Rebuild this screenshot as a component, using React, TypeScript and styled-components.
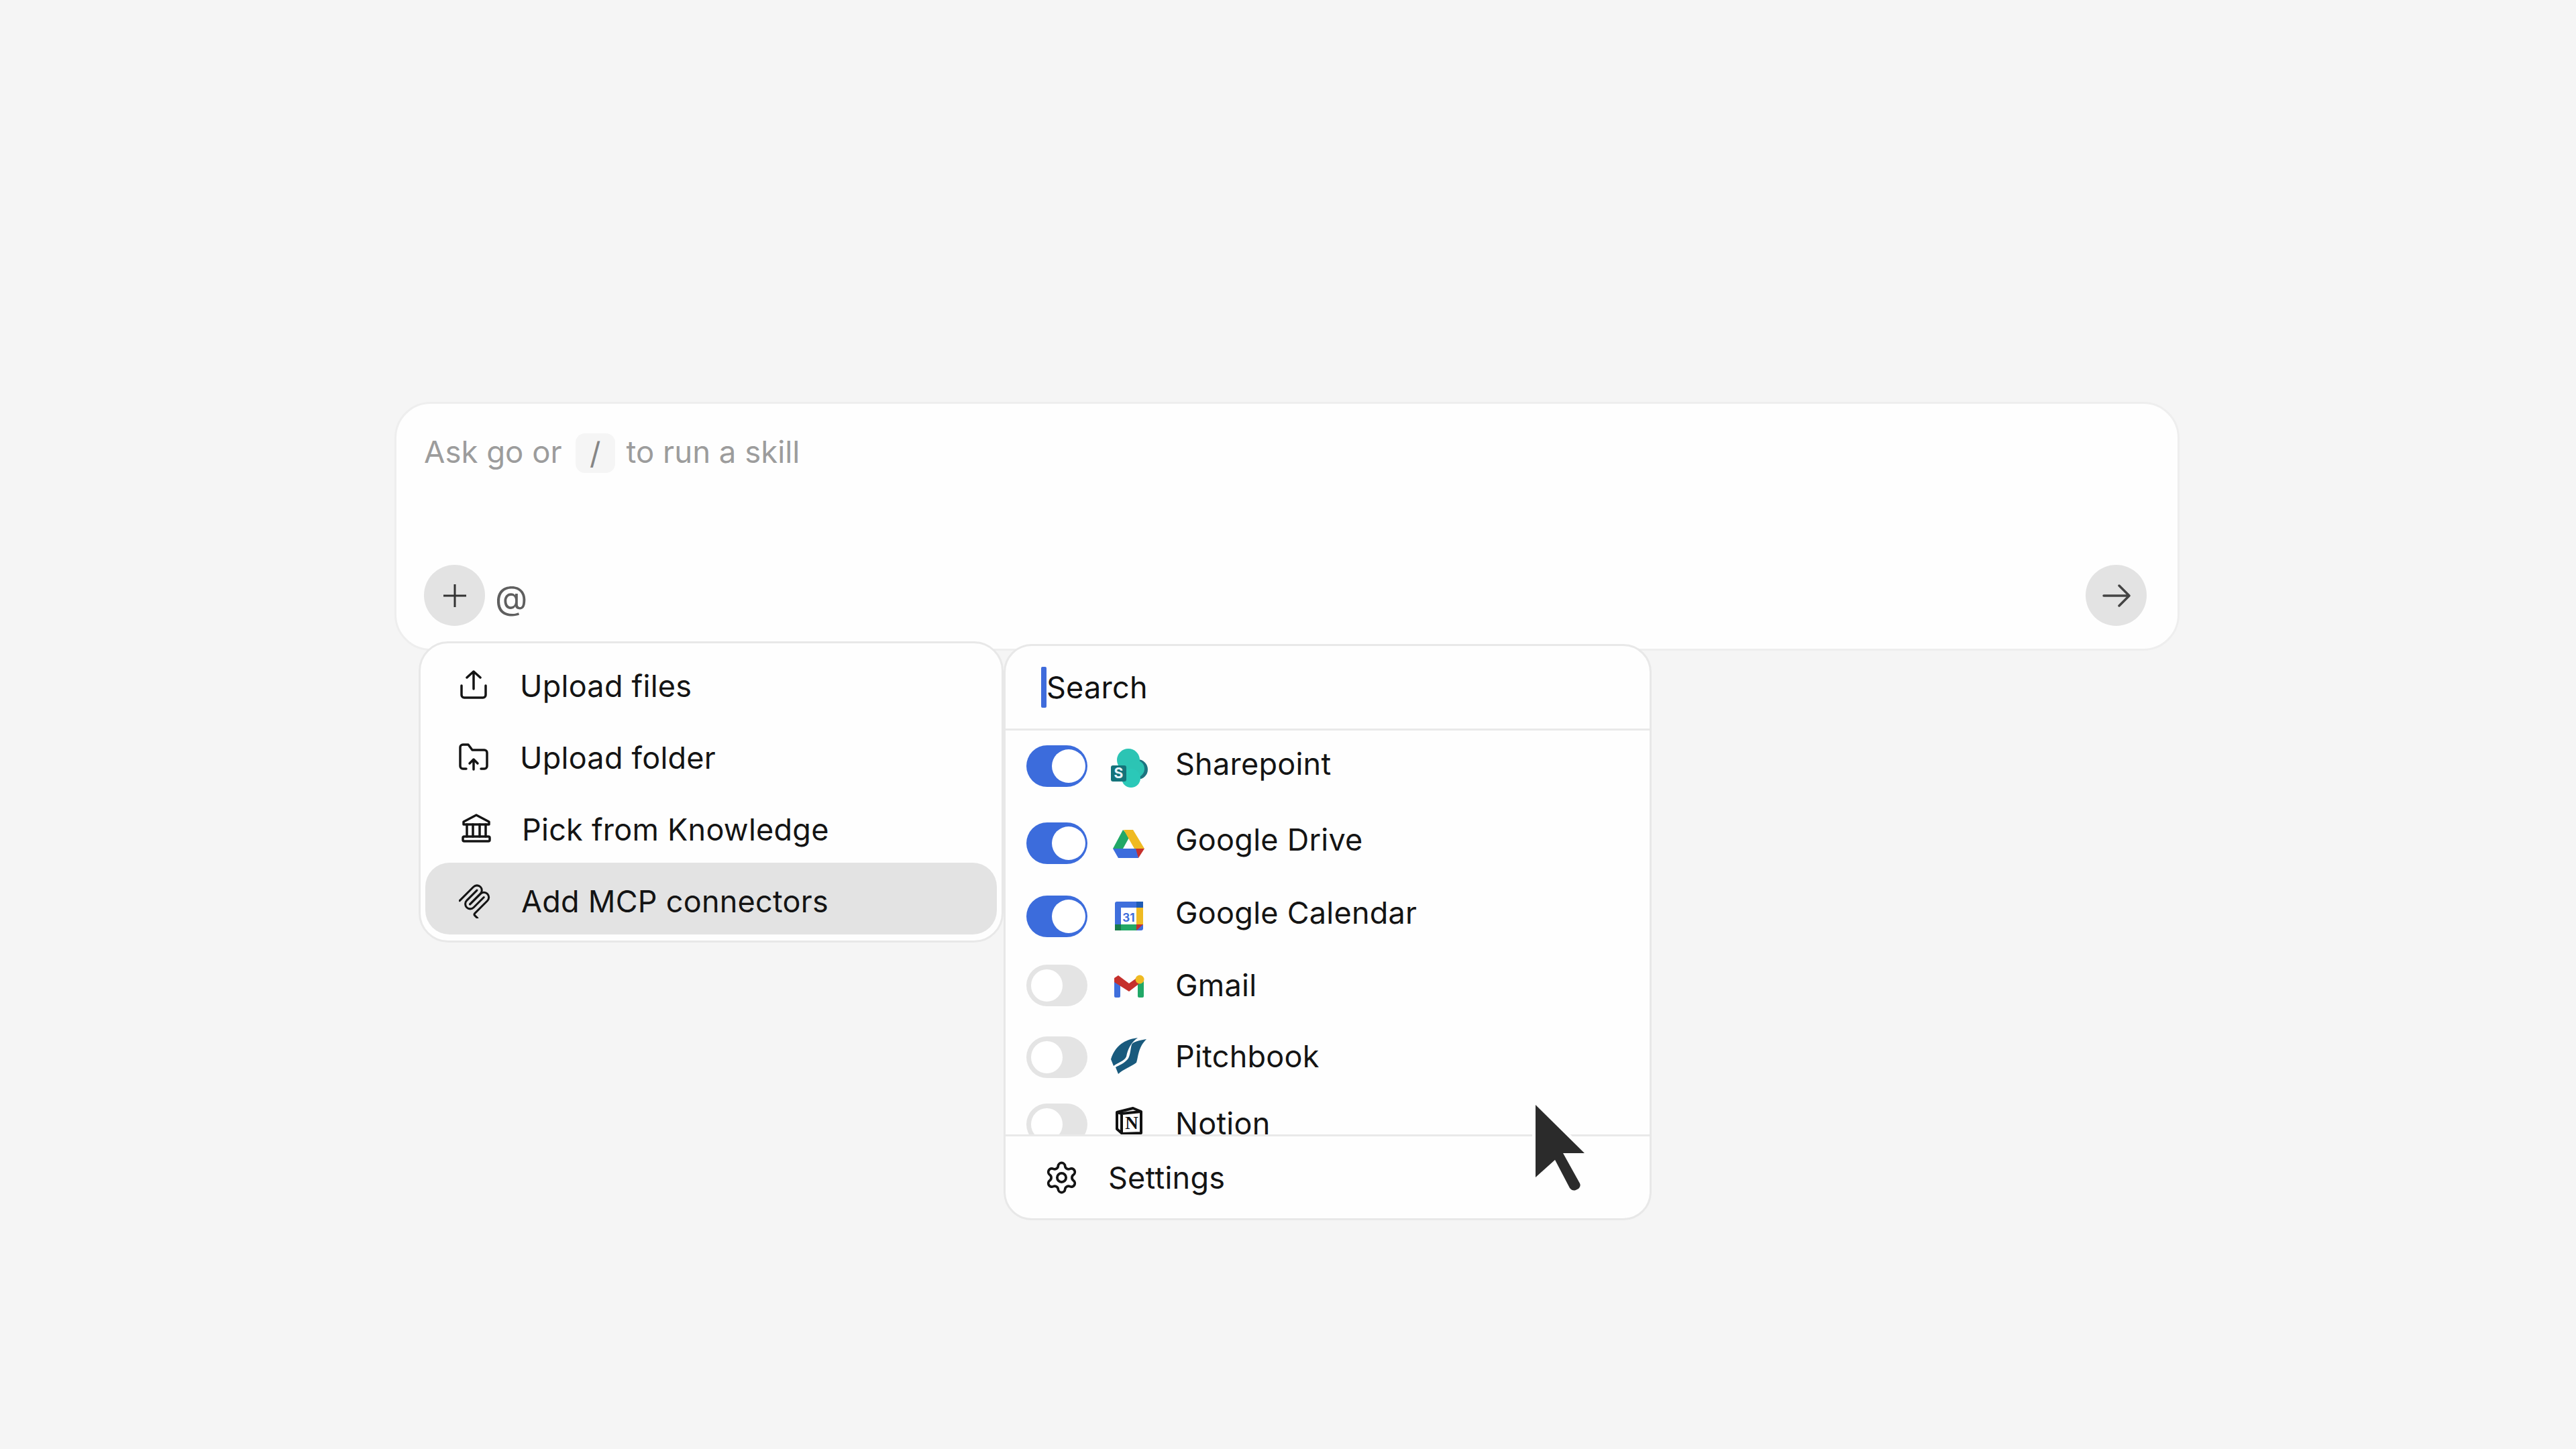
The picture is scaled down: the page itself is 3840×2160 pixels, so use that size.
import { type ReactNode } from "react";
import { Settings } from "lucide-react";
import { createGlobalStyle, styled } from "styled-components";

const GlobalStyle = createGlobalStyle`
  html,
  body {
    margin: 0;
    background: #f5f5f5;
  }

  body {
    width: 3840px;
    height: 2160px;
    overflow: hidden;
    font-family: Inter, "Liberation Sans", sans-serif;
    color: #141414;
  }
`;

const Page = styled.div`
  padding: 599px 0 0 588px;
`;

const Composer = styled.div`
  position: relative;
  box-sizing: border-box;
  width: 2661px;
  height: 371px;
  padding: 40px 46px 34px 41px;
  display: flex;
  flex-flow: column nowrap;
  justify-content: space-between;
  background: #fefefe;
  border: 3px solid #eeeeee;
  border-radius: 54px;
`;

const Placeholder = styled.div`
  display: flex;
  flex-flow: row nowrap;
  align-items: center;
  font-size: 45.5px;
  color: #9c9c9c;
`;

const SlashChip = styled.span`
  width: 59px;
  height: 59px;
  margin: 4px 17px 0 20px;
  display: flex;
  justify-content: center;
  align-items: center;
  background: #f5f5f5;
  border-radius: 14px;
  color: #858585;
`;

const ComposerBar = styled.div`
  display: flex;
  flex-flow: row nowrap;
  align-items: center;
`;

const RoundButton = styled.button`
  width: 91px;
  height: 91px;
  padding: 0;
  display: flex;
  justify-content: center;
  align-items: center;
  border: 0;
  border-radius: 50%;
  background: #e3e3e3;
`;

const AtSign = styled.span`
  margin: 6px auto 0 15px;
  font-size: 50px;
  color: #5f5f5f;
`;

const Popovers = styled.div`
  position: absolute;
  top: 354px;
  left: 33px;
  display: flex;
  flex-flow: row nowrap;
  align-items: flex-start;
`;

const ActionMenu = styled.div`
  box-sizing: border-box;
  width: 872px;
  padding: 6px 7px 9px;
  background: #fefefe;
  border: 3px solid #e8e8e8;
  border-radius: 44px;
`;

const ActionRow = styled.div<{ $active?: boolean }>`
  box-sizing: border-box;
  height: 107px;
  padding: 7px 0 0 50px;
  display: flex;
  flex-flow: row nowrap;
  align-items: center;
  background: ${({ $active }) => ($active ? "#e3e3e3" : "transparent")};
  border-radius: 36px;
`;

const ActionLabel = styled.span<{ $indent?: number }>`
  margin-left: ${({ $indent }) => 43 + ($indent ?? 0)}px;
  font-size: 45px;
  letter-spacing: 0.25px;
`;

const ConnectorPanel = styled.div`
  box-sizing: border-box;
  width: 966px;
  height: 859px;
  margin-top: 4px;
  display: flex;
  flex-flow: column nowrap;
  position: relative;
  background: #fefefe;
  border: 3px solid #e8e8e8;
  border-radius: 42px;
`;

const SearchBar = styled.div`
  flex: 0 0 126px;
  box-sizing: border-box;
  padding-left: 53px;
  display: flex;
  flex-flow: row nowrap;
  align-items: center;
  border-bottom: 3px solid #e9e9e9;
  font-size: 45px;
  letter-spacing: 0.25px;
  color: #111111;
`;

const Caret = styled.span`
  width: 8px;
  height: 61px;
  background: #3f6bdb;
  border-radius: 2px;
`;

const ConnectorList = styled.div`
  flex: 1 1 0;
  min-height: 0;
  padding-left: 31px;
  overflow: hidden;
`;

const ConnectorRow = styled.div<{ $gap: number }>`
  height: 62px;
  margin-top: ${({ $gap }) => $gap}px;
  display: flex;
  flex-flow: row nowrap;
  align-items: center;
`;

const Toggle = styled.span<{ $on?: boolean }>`
  box-sizing: border-box;
  width: 91px;
  height: 62px;
  padding: 0 ${({ $on }) => ($on ? "3px" : "7px")};
  display: flex;
  justify-content: ${({ $on }) => ($on ? "flex-end" : "flex-start")};
  align-items: center;
  background: ${({ $on }) => ($on ? "#3c6cdc" : "#e4e4e4")};
  border-radius: 31px;

  &::after {
    content: "";
    width: ${({ $on }) => ($on ? "50px" : "47px")};
    height: ${({ $on }) => ($on ? "50px" : "48px")};
    background: #ffffff;
    border-radius: 50%;
  }
`;

const LogoSlot = styled.span<{ $shift: number }>`
  width: 56px;
  margin: 0 41px 0 34px;
  display: flex;
  justify-content: center;
  transform: translateY(${({ $shift }) => $shift}px);
`;

const ConnectorName = styled.span<{ $shift: number }>`
  font-size: 45px;
  letter-spacing: 0.25px;
  transform: translateY(${({ $shift }) => $shift}px);
`;

const PanelFooter = styled.div`
  flex: 0 0 125px;
  box-sizing: border-box;
  padding-left: 57px;
  display: flex;
  flex-flow: row nowrap;
  align-items: center;
  gap: 43px;
  border-top: 3px solid #e9e9e9;
  font-size: 45px;
  letter-spacing: 0.25px;
`;

const Pointer = styled.svg`
  position: absolute;
  top: 684px;
  left: 790px;
  overflow: visible;
`;

const SharepointLogo = () => (
  <svg width="56" height="58" viewBox="0 0 56 58">
    <circle cx="41" cy="31" r="15" fill="#1d7480" />
    <circle cx="27" cy="17" r="17" fill="#2cc4b4" />
    <circle cx="38" cy="30" r="13" fill="#2cc4b4" />
    <circle cx="31" cy="44" r="14" fill="#2bc8b8" />
    <rect x="1" y="25" width="23" height="24" rx="3" fill="#14737a" />
    <text x="12.5" y="44" fontSize="21" fontWeight="700" fill="#e8f4fb" textAnchor="middle" fontFamily="Inter">
      S
    </text>
  </svg>
);

const DriveLogo = () => (
  <svg width="48" height="43" viewBox="0 0 48 43">
    <polygon points="15,1 25,11 15,29 0,29" fill="#21a867" />
    <polygon points="16,1 30,1 47,29 32,29" fill="#efba22" />
    <polygon points="0,29 36,29 38,43 8,43" fill="#3c6cdc" />
    <polygon points="34,29 47,29 38,43" fill="#c5302c" />
  </svg>
);

const CalendarLogo = () => (
  <svg width="42" height="43" viewBox="0 0 42 43">
    <rect width="42" height="43" rx="3" fill="#3f6fdc" />
    <rect x="32" y="0" width="10" height="9" fill="#1f5bb5" />
    <rect x="9" y="9" width="23" height="25" fill="#ffffff" />
    <rect x="32" y="9" width="10" height="25" fill="#efba22" />
    <rect x="9" y="34" width="23" height="9" fill="#21a867" />
    <rect x="0" y="34" width="9" height="9" fill="#177a4a" />
    <polygon points="32,34 42,34 32,43" fill="#c5302c" />
    <text x="20.5" y="30" fontSize="17" fontWeight="700" fill="#3f6fdc" textAnchor="middle" fontFamily="Inter">
      31
    </text>
  </svg>
);

const GmailLogo = () => (
  <svg width="46" height="35" viewBox="0 0 46 35">
    <rect x="1" y="9" width="9" height="25" rx="2" fill="#3f6fdc" />
    <rect x="36" y="9" width="9" height="25" rx="2" fill="#21a867" />
    <polygon points="1,5 7,1 23,13 37,3 40,12 23,25 1,11" fill="#c5302c" />
    <circle cx="39" cy="7" r="6.5" fill="#efba22" />
  </svg>
);

const PitchbookLogo = () => (
  <svg width="54" height="56" viewBox="0 0 54 56">
    <path d="M40 1C26 3 8 8 0 33L4 43C10 38 20 36 23 29C25 18 30 8 40 1Z" fill="#195a7d" />
    <path
      d="M53 3C42 5 33 7 31 11C29 18 29 28 25 33C20 39 12 42 7 45L11 55C18 48 30 44 38 38C41 30 40 16 53 3Z"
      fill="#195a7d"
    />
  </svg>
);

const NotionLogo = () => (
  <svg width="40" height="42" viewBox="0 0 40 42">
    <path
      d="M2 8L26 2L38 7V39L10 40L2 33Z"
      fill="#ffffff"
      stroke="#111111"
      strokeWidth="4"
      strokeLinejoin="round"
    />
    <path d="M9 10L38 7M9 10V40" fill="none" stroke="#111111" strokeWidth="4" />
    <path d="M2 8L9 10" stroke="#111111" strokeWidth="4" />
    <text x="24" y="33" fontSize="27" fontWeight="700" fill="#111111" textAnchor="middle" fontFamily="Liberation Serif">
      N
    </text>
  </svg>
);

const UploadIcon = () => (
  <svg width="48" height="48" viewBox="0 0 48 48" fill="none" stroke="#141414" strokeWidth="3.5" strokeLinecap="round" strokeLinejoin="round">
    <path d="M22 3V29M12 12L22 3L32 12" />
    <path d="M4 24V38A4 4 0 0 0 8 42H36A4 4 0 0 0 40 38V24" />
  </svg>
);

const FolderUploadIcon = () => (
  <svg width="48" height="48" viewBox="0 0 48 48" fill="none" stroke="#141414" strokeWidth="3.5" strokeLinecap="round" strokeLinejoin="round">
    <path d="M11 41H6A4 4 0 0 1 2 37V9A4 4 0 0 1 6 5H14L20 13H38A4 4 0 0 1 42 17V37A4 4 0 0 1 38 41H33" />
    <path d="M22 42V27M16 33L22 27L28 33" />
  </svg>
);

const BankIcon = () => (
  <svg width="48" height="48" viewBox="0 0 48 48" fill="none" stroke="#141414" strokeWidth="3.5" strokeLinecap="round" strokeLinejoin="round">
    <path d="M26 3L7 13V17H45V13Z" />
    <path d="M12 17V35M21 17V35M31 17V35M40 17V35" />
    <rect x="6" y="35" width="40" height="7" rx="2" />
  </svg>
);

const McpIcon = () => (
  <svg width="48" height="52" viewBox="14 2 158 168" fill="none" stroke="#141414" strokeWidth="10" strokeLinecap="round">
    <path d="M18 84.85L85.88 16.97C95.25 7.6 110.45 7.6 119.82 16.97C129.2 26.34 129.2 41.54 119.82 50.91L68.56 102.18" />
    <path d="M69.27 101.47L119.82 50.91C129.2 41.54 144.39 41.54 153.77 50.91L154.12 51.27C163.49 60.64 163.49 75.83 154.12 85.21L92.72 146.6C89.6 149.72 89.6 154.79 92.72 157.91L105.33 170.52" />
    <path d="M102.85 33.94L52.65 84.15C43.28 93.52 43.28 108.71 52.65 118.09C62.02 127.46 77.22 127.46 86.59 118.09L136.79 67.88" />
  </svg>
);

const actions: { label: string; icon: ReactNode; indent?: number; active?: boolean }[] = [
  { label: "Upload files", icon: <UploadIcon /> },
  { label: "Upload folder", icon: <FolderUploadIcon /> },
  { label: "Pick from Knowledge", icon: <BankIcon />, indent: 3 },
  { label: "Add MCP connectors", icon: <McpIcon />, indent: 2, active: true },
];

// gap = space above the toggle; the recording's rows are not evenly spaced
const connectors: {
  name: string;
  logo: ReactNode;
  on?: boolean;
  gap: number;
  logoShift: number;
  nameShift: number;
}[] = [
  { name: "Sharepoint", logo: <SharepointLogo />, on: true, gap: 22, logoShift: 3, nameShift: -4 },
  { name: "Google Drive", logo: <DriveLogo />, on: true, gap: 53, logoShift: 0, nameShift: -6 },
  { name: "Google Calendar", logo: <CalendarLogo />, on: true, gap: 47, logoShift: -1, nameShift: -6 },
  { name: "Gmail", logo: <GmailLogo />, gap: 41, logoShift: 1, nameShift: -1 },
  { name: "Pitchbook", logo: <PitchbookLogo />, gap: 45, logoShift: -2, nameShift: -2 },
  { name: "Notion", logo: <NotionLogo />, gap: 38, logoShift: -5, nameShift: -2 },
];

export default function App() {
  return (
    <>
      <GlobalStyle />
      <Page>
        <Composer>
          <Placeholder>
            Ask go or
            <SlashChip>/</SlashChip>
            to run a skill
          </Placeholder>

          <ComposerBar>
            <RoundButton>
              <svg width="36" height="36" viewBox="0 0 36 36" fill="none" stroke="#333333" strokeWidth="3">
                <path d="M18 1V35M1 18H35" />
              </svg>
            </RoundButton>
            <AtSign>@</AtSign>
            <RoundButton>
              <svg width="42" height="34" viewBox="0 0 42 34" fill="none" stroke="#444444" strokeWidth="3.5" strokeLinecap="round" strokeLinejoin="round">
                <path d="M2 17H39M25 2L40 17L25 32" />
              </svg>
            </RoundButton>
          </ComposerBar>

          <Popovers>
            <ActionMenu>
              {actions.map((action) => (
                <ActionRow key={action.label} $active={action.active}>
                  {action.icon}
                  <ActionLabel $indent={action.indent}>{action.label}</ActionLabel>
                </ActionRow>
              ))}
            </ActionMenu>

            <ConnectorPanel>
              <SearchBar>
                <Caret />
                Search
              </SearchBar>

              <ConnectorList>
                {connectors.map((connector) => (
                  <ConnectorRow key={connector.name} $gap={connector.gap}>
                    <Toggle $on={connector.on} />
                    <LogoSlot $shift={connector.logoShift}>{connector.logo}</LogoSlot>
                    <ConnectorName $shift={connector.nameShift}>{connector.name}</ConnectorName>
                  </ConnectorRow>
                ))}
              </ConnectorList>

              <PanelFooter>
                <Settings size={53} strokeWidth={1.7} color="#141414" />
                Settings
              </PanelFooter>

              <Pointer width="74" height="130" viewBox="0 0 74 130">
                <path
                  d="M0 0V108L29 82L51 124Q55 129 60 127L64 125Q68 121 66 117L41 72H73Z"
                  fill="#2b2b2b"
                  stroke="#fefefe"
                  strokeWidth="10"
                  paintOrder="stroke"
                  strokeLinejoin="round"
                />
              </Pointer>
            </ConnectorPanel>
          </Popovers>
        </Composer>
      </Page>
    </>
  );
}
